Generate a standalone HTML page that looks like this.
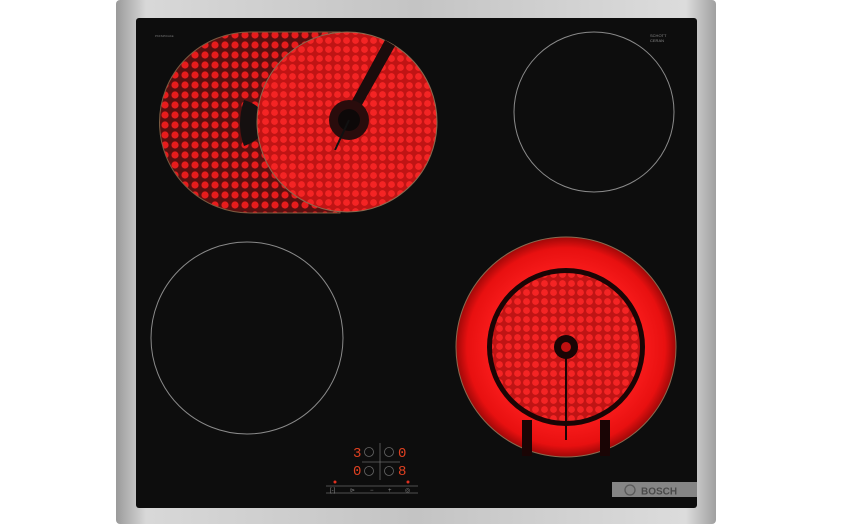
<!DOCTYPE html>
<html><head><meta charset="utf-8"><style>
html,body{margin:0;padding:0;background:#fff;width:850px;height:526px;overflow:hidden}
svg{display:block}
</style></head><body>
<svg width="850" height="526" viewBox="0 0 850 526" xmlns="http://www.w3.org/2000/svg">
<defs>
<linearGradient id="steel" x1="0" y1="0" x2="1" y2="0">
<stop offset="0" stop-color="#9a9a9a"/><stop offset="0.05" stop-color="#d8d8d8"/><stop offset="0.5" stop-color="#c4c4c4"/><stop offset="0.95" stop-color="#dcdcdc"/><stop offset="1" stop-color="#a0a0a0"/>
</linearGradient>
<pattern id="dots" width="9" height="9" patternUnits="userSpaceOnUse">
<rect width="9" height="9" fill="#c01414"/>
<circle cx="4.5" cy="4.5" r="3.4" fill="#f42424"/>
</pattern>
<pattern id="dots2" width="10" height="10" patternUnits="userSpaceOnUse">
<rect width="10" height="10" fill="#5a1010"/>
<circle cx="5" cy="5" r="3.6" fill="#e81c1c"/>
</pattern>
<radialGradient id="ring" cx="0.5" cy="0.5" r="0.5">
<stop offset="0.6" stop-color="#ff2020"/><stop offset="0.9" stop-color="#e81010"/><stop offset="1" stop-color="#a00808"/>
</radialGradient>
</defs>
<rect x="116" y="0" width="600" height="524" rx="4" fill="url(#steel)"/>
<rect x="136" y="18" width="561" height="490" rx="3" fill="#0d0d0d"/>
<text x="155" y="37" font-family="Liberation Sans, sans-serif" font-size="3" fill="#777">PKF645CA1E</text>
<text x="650" y="37" font-family="Liberation Sans, sans-serif" font-size="4" fill="#888">SCHOTT</text>
<text x="650" y="42" font-family="Liberation Sans, sans-serif" font-size="4" fill="#888">CERAN</text>
<!-- oval burner -->
<path d="M250 32 L340 32 L340 213 L250 213 A90.5 90.5 0 0 1 250 32 Z" fill="url(#dots2)" stroke="#7a5a40" stroke-width="1"/>
<path d="M244 100 Q262 105 268 122 Q262 140 244 146 Q236 124 244 100Z" fill="#151010"/>
<circle cx="347" cy="122" r="90" fill="url(#dots)" stroke="#8a6a50" stroke-width="1"/>
<path d="M385 40 L395 46 L358 112 L348 108Z" fill="#1a0c0c"/>
<circle cx="349" cy="120" r="20" fill="#2a0c0c"/>
<circle cx="349" cy="120" r="11" fill="#0d0808"/>
<line x1="349" y1="120" x2="335" y2="150" stroke="#111" stroke-width="2"/>
<!-- other burners -->
<circle cx="594" cy="112" r="80" fill="none" stroke="#8a8a8a" stroke-width="1"/>
<circle cx="247" cy="338" r="96" fill="none" stroke="#8a8a8a" stroke-width="1"/>
<circle cx="566" cy="347" r="110" fill="url(#ring)" stroke="#8a6a50" stroke-width="1"/>
<circle cx="566" cy="347" r="79" fill="#1a0505"/>
<circle cx="566" cy="347" r="74" fill="url(#dots)"/>
<rect x="522" y="420" width="10" height="36" fill="#1a0505"/>
<rect x="600" y="420" width="10" height="36" fill="#1a0505"/>
<line x1="566" y1="350" x2="566" y2="440" stroke="#1a0505" stroke-width="2"/>
<circle cx="566" cy="347" r="12" fill="#1a0505"/>
<circle cx="566" cy="347" r="5" fill="#c01010"/>
<!-- controls -->
<g font-family="Liberation Mono, monospace" font-size="14" fill="#e04020">
<text x="353" y="457">3</text><text x="398" y="457">0</text>
<text x="353" y="475">0</text><text x="398" y="475">8</text>
</g>
<g fill="none" stroke="#666" stroke-width="0.8">
<circle cx="369" cy="452" r="4.5"/><circle cx="389" cy="452" r="4.5"/>
<circle cx="369" cy="471" r="4.5"/><circle cx="389" cy="471" r="4.5"/>
<line x1="380" y1="443" x2="380" y2="480"/><line x1="362" y1="462" x2="400" y2="462"/>
<line x1="326" y1="486" x2="418" y2="486"/><line x1="326" y1="493" x2="418" y2="493"/>
</g>
<circle cx="335" cy="482" r="1.5" fill="#e03020"/><circle cx="408" cy="482" r="1.5" fill="#e03020"/>
<g font-family="Liberation Sans, sans-serif" font-size="6" fill="#888">
<text x="330" y="492">[-]</text><text x="350" y="492">⊳</text><text x="370" y="492">−</text><text x="388" y="492">+</text><text x="405" y="492">◎</text>
</g>
<rect x="612" y="482" width="85" height="15" fill="#858585"/>
<circle cx="630" cy="490" r="5" fill="none" stroke="#5a5a5a" stroke-width="1.3"/>
<text x="641" y="494.5" font-family="Liberation Sans, sans-serif" font-weight="bold" font-size="10" fill="#4a4a4a">BOSCH</text>
</svg>
</body></html>
